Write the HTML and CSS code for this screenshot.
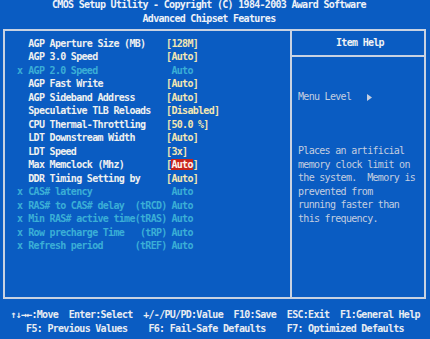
FILE: index.html
```html
<!DOCTYPE html>
<html lang="en">
<head>
  <meta charset="UTF-8" />
  <meta name="viewport" content="width=device-width, initial-scale=1.0" />
  <title>Advanced Chipset Features</title>
  <link rel="stylesheet" href="styles.css">
</head>
<body>
  <div class="title">
    <div class="title-line">CMOS Setup Utility - Copyright (C) 1984-2003 Award Software</div>
    <div class="title-line">Advanced Chipset Features</div>
  </div>

  <div class="screen">
    <div class="items">
      <div class="row"><span class="mark"></span><span class="label">AGP Aperture Size (MB)</span><span class="value">[128M]</span></div>
      <div class="row"><span class="mark"></span><span class="label">AGP 3.0 Speed</span><span class="value">[Auto]</span></div>
      <div class="row off"><span class="mark">x</span><span class="label">AGP 2.0 Speed</span><span class="value"> Auto</span></div>
      <div class="row"><span class="mark"></span><span class="label">AGP Fast Write</span><span class="value">[Auto]</span></div>
      <div class="row"><span class="mark"></span><span class="label">AGP Sideband Address</span><span class="value">[Auto]</span></div>
      <div class="row"><span class="mark"></span><span class="label">Speculative TLB Reloads</span><span class="value">[Disabled]</span></div>
      <div class="row"><span class="mark"></span><span class="label">CPU Thermal-Throttling</span><span class="value">[50.0 %]</span></div>
      <div class="row"><span class="mark"></span><span class="label">LDT Downstream Width</span><span class="value">[Auto]</span></div>
      <div class="row"><span class="mark"></span><span class="label">LDT Speed</span><span class="value">[3x]</span></div>
      <div class="row"><span class="mark"></span><span class="label">Max Memclock (Mhz)</span><span class="value">[<span class="hl">Auto</span>]</span></div>
      <div class="row"><span class="mark"></span><span class="label">DDR Timing Setting by</span><span class="value">[Auto]</span></div>
      <div class="row off"><span class="mark">x</span><span class="label">CAS# latency</span><span class="value"> Auto</span></div>
      <div class="row off"><span class="mark">x</span><span class="label">RAS# to CAS# delay  (tRCD)</span><span class="value"> Auto</span></div>
      <div class="row off"><span class="mark">x</span><span class="label">Min RAS# active time(tRAS)</span><span class="value"> Auto</span></div>
      <div class="row off"><span class="mark">x</span><span class="label">Row precharge Time   (tRP)</span><span class="value"> Auto</span></div>
      <div class="row off"><span class="mark">x</span><span class="label">Refresh period      (tREF)</span><span class="value"> Auto</span></div>
    </div>

    <div class="help">
      <div class="help-head">Item Help</div>
      <div class="help-body">
        <div class="menu-level">Menu Level   <svg class="arrow" width="5" height="7" viewBox="0 0 5 7"><path d="M0 0 L5 3.5 L0 7 Z" fill="#c4cee0"/></svg></div>
        <p class="help-text">Places an artificial<br>memory clock limit on<br>the system.  Memory is<br>prevented from<br>running faster than<br>this frequency.</p>
      </div>
    </div>
  </div>

  <div class="keys">
    <div class="keys-line">↑↓→←:Move  Enter:Select  +/-/PU/PD:Value  F10:Save  ESC:Exit  F1:General Help</div>
    <div class="keys-line">F5: Previous Values    F6: Fail-Safe Defaults    F7: Optimized Defaults</div>
  </div>
</body>
</html>
```

FILE: styles.css
```css
body {
  margin: 0;
  padding: 0;
  background: #0a5cc2;
  font-family: "DejaVu Sans Mono", "Liberation Mono", monospace;
  font-weight: bold;
  font-size: 10px;
  letter-spacing: -0.7px;
  color: #eef0f0;
  overflow: hidden;
}
.title {
  height: 31px;
  line-height: 13.5px;
  text-align: center;
  padding-right: 12px;
  color: #eef2f8;
}
.title-line {
  white-space: pre;
}
.title-line:first-child {
  margin-top: -2px;
}
.screen {
  display: grid;
  grid-template-columns: 285px 1fr;
  height: 266px;
  margin: 0 4px 0 3px;
  border: 2px solid #c8d2e2;
}
.items {
  padding: 5.75px 0 0 12px;
}
.row {
  display: flex;
  height: 13.5px;
  line-height: 13.5px;
  white-space: pre;
}
.mark {
  width: 11.3px;
}
.label {
  width: 137.8px;
}
.value {
  color: #f2e6b2;
}
.row.off,
.row.off .value {
  color: #3aaed6;
}
.hl {
  background: #c8241c;
  color: #fff4ee;
}
.help {
  border-left: 2px solid #c8d2e2;
}
.help-head {
  height: 24px;
  line-height: 23px;
  text-align: center;
  padding-left: 4px;
  border-bottom: 2px solid #c8d2e2;
  color: #f0f2f4;
}
.help-body {
  padding: 6.25px 0 0 6px;
  color: #c4cee0;
  font-weight: normal;
  line-height: 13.5px;
  white-space: pre;
}
.arrow {
  vertical-align: -0.5px;
}
.help-text {
  margin: 13.5px 0 0;
}
.keys {
  padding-top: 9px;
  line-height: 14px;
  text-align: center;
  color: #e8ecf2;
}
.keys-line {
  white-space: pre;
}
```
